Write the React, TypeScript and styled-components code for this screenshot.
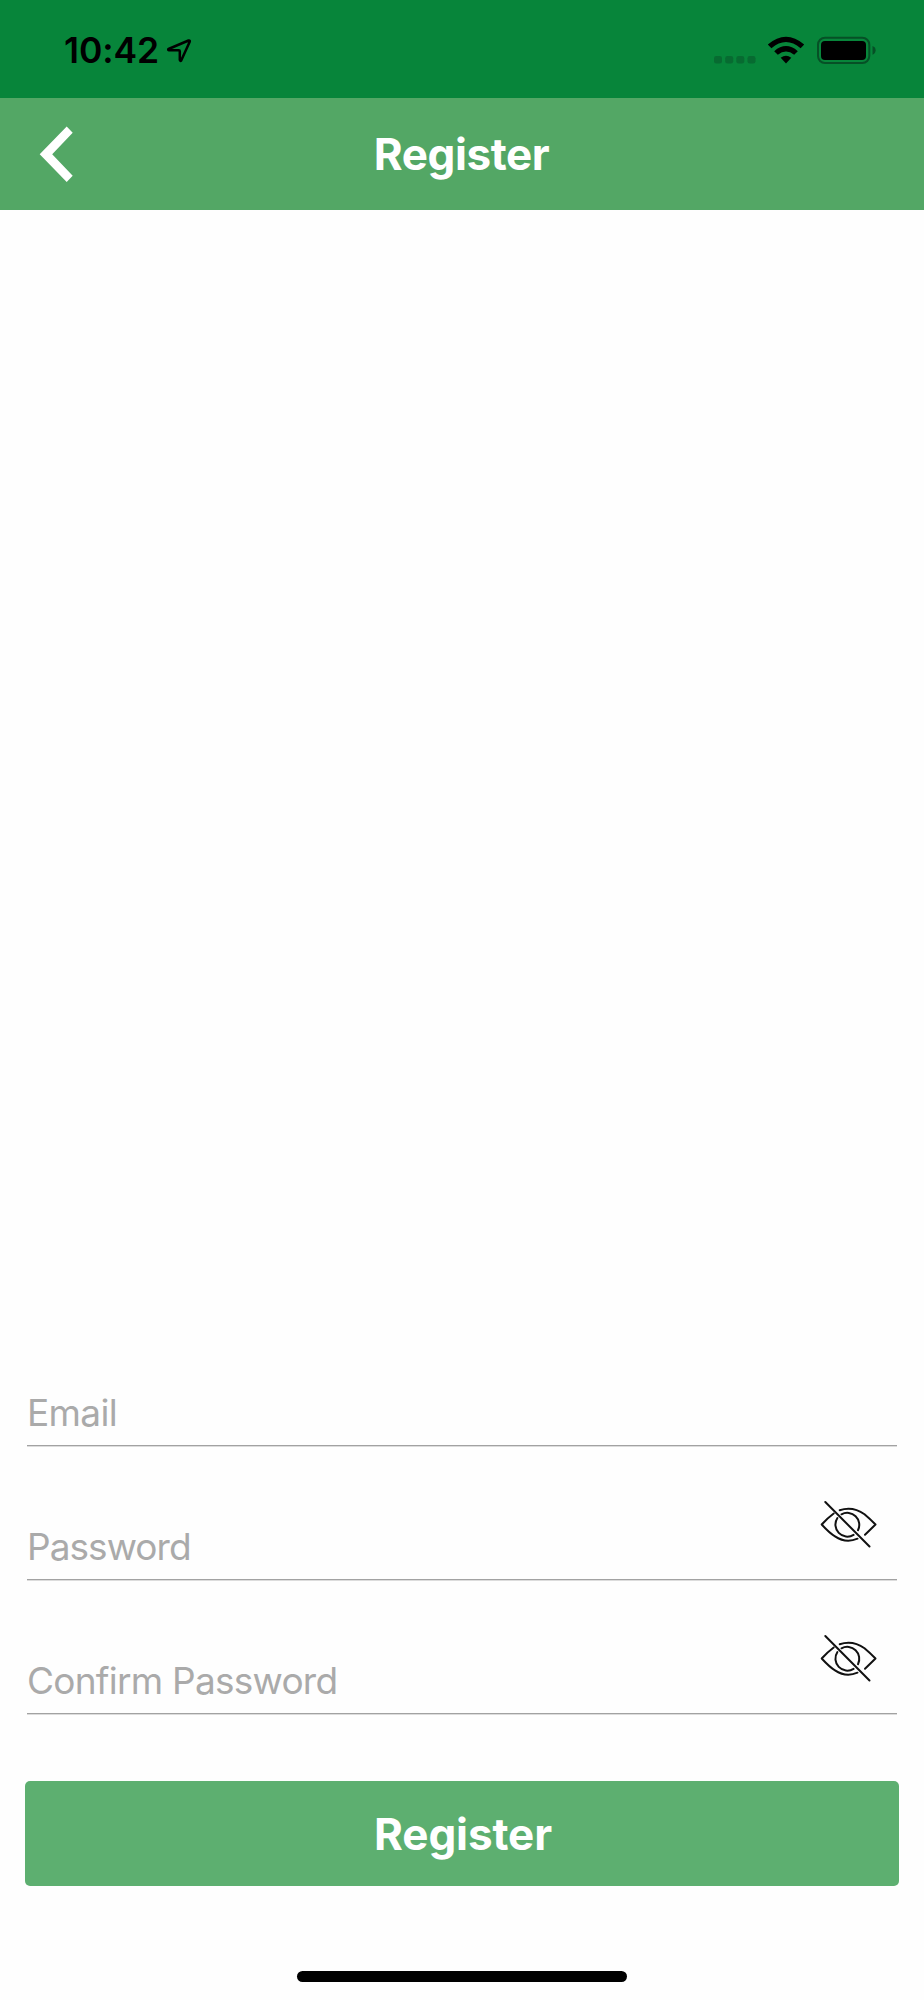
import React from "react";
import styled, { createGlobalStyle } from "styled-components";

const GlobalStyle = createGlobalStyle`
  *, *::before, *::after { box-sizing: border-box; }
  body {
    margin: 0;
    background: #fefefe;
    font-family: Inter, "Liberation Sans", sans-serif;
  }
`;

const Screen = styled.main`
  display: flex;
  flex-direction: column;
  width: 924px;
  height: 2000px;
  background: #fefefe;
  overflow: hidden;
`;

const StatusBar = styled.div`
  display: flex;
  justify-content: space-between;
  flex: none;
  height: 98px;
  padding: 29px 47px 0 64px;
  background: #07853a;
`;

const StatusGroup = styled.div`
  display: flex;
  align-items: flex-start;
`;

const Clock = styled.span`
  width: 103px;
  font-size: 35.5px;
  font-weight: 600;
  line-height: 43px;
  letter-spacing: -0.1px;
  color: #000;
`;

const Header = styled.header`
  display: grid;
  grid-template-columns: 120px 1fr 120px;
  align-items: center;
  flex: none;
  height: 112px;
  background: #53a765;
`;

const BackButton = styled.button`
  display: flex;
  padding: 0 0 0 39px;
  border: 0;
  background: none;
`;

const Title = styled.h1`
  margin: 0;
  padding-right: 1px;
  text-align: center;
  font-size: 44px;
  font-weight: 700;
  line-height: 54px;
  letter-spacing: -0.4px;
  color: #fff;
`;

const Form = styled.form`
  display: flex;
  flex-direction: column;
  justify-content: flex-end;
  flex: 1;
  padding: 0 25px 85px;
`;

const Field = styled.label`
  display: flex;
  justify-content: space-between;
  align-items: flex-end;
  height: 134px;
  margin: 0 2px;
  border-bottom: 1px solid #a2a2a2;
  box-shadow: 0 1px #dcdcdc;
`;

const Placeholder = styled.span<{ $tracking: number }>`
  padding-bottom: 9px;
  font-size: 37px;
  font-weight: 400;
  line-height: 46px;
  letter-spacing: ${(p) => p.$tracking}px;
  color: #aaa;
`;

const EyeToggle = styled.button`
  display: flex;
  padding: 0;
  margin: 0 18px 30px 0;
  border: 0;
  background: none;
`;

const SubmitButton = styled.button`
  height: 105px;
  margin-top: 67px;
  padding: 0 0 0 2px;
  border: 0;
  border-radius: 5px;
  background: #5daf70;
  font-family: inherit;
  font-size: 44px;
  font-weight: 700;
  letter-spacing: -0.1px;
  color: #fff;
`;

const HomeArea = styled.div`
  display: flex;
  justify-content: center;
  flex: none;
  height: 29px;
`;

const HomeIndicator = styled.div`
  width: 330px;
  height: 11px;
  border-radius: 6px;
  background: #000;
`;

const LocationIcon = () => (
  <svg width="26" height="43" viewBox="167 29 26 43" fill="none" stroke="#000" strokeWidth="2.5" strokeLinejoin="round">
    <path d="M168.5 49 L188.5 40.5 Q190.3 40 189.6 42 L181.2 60.5 Q180.2 61.5 179.8 60 V51.2 Q179.8 50.2 178.8 50.2 H169 Q167.5 49.8 168.5 49 Z" />
  </svg>
);

const StatusIcons = () => (
  <svg width="164" height="43" viewBox="713 29 164 43">
    <g fill="#076b31">
      <rect x="714" y="56" width="8" height="7.5" rx="2.3" />
      <rect x="725.2" y="56" width="8" height="7.5" rx="2.3" />
      <rect x="736.3" y="56" width="8" height="7.5" rx="2.3" />
      <rect x="747.5" y="56" width="8" height="7.5" rx="2.3" />
    </g>
    <path d="M767.8 44.6 Q786 29 804.2 44.6 L800.6 48.2 Q786 36 771.4 48.2 Z" />
    <path d="M774.2 51.2 Q786 41 797.8 51.2 L794.2 54.8 Q786 48 777.8 54.8 Z" />
    <path d="M780.7 57.7 Q786 53.6 791.3 57.7 L786 63.4 Z" />
    <rect x="818" y="37.7" width="51.3" height="25.4" rx="7" fill="none" stroke="#065026" strokeWidth="2" />
    <rect x="821" y="41" width="45" height="19" rx="4" />
    <path d="M872.5 46 Q875.6 47 875.6 50.3 T872.5 54.8 Z" fill="#065026" />
  </svg>
);

const ChevronIcon = () => (
  <svg width="34" height="56" viewBox="39.3 126 34 56">
    <path d="M40 154.3 L67 126.5 L73 132.8 L52.5 154.3 L73 175.7 L67 182 Z" fill="#fff" />
  </svg>
);

const EyeOffIcon = () => (
  <svg width="60" height="50" viewBox="819 1499 60 50" fill="none" stroke="#111" strokeWidth="2" strokeLinecap="round" strokeLinejoin="round">
    <path d="M825.3 1502 L869.5 1546.5" />
    <path d="M833.7 1513.5 Q827 1518.5 821.7 1524.5 Q830 1533.5 835 1536.3 C842 1541 850 1541.8 857.5 1538.7" />
    <path d="M839.7 1510.3 C848 1507.5 857 1509 864.5 1514.3 Q869.5 1518.5 875.5 1524.5 L865 1534.7" />
    <path d="M841.5 1514.3 A12 12 0 0 1 858 1530.2" />
    <path d="M837.4 1518 A12 12 0 0 0 853.6 1534.9" />
  </svg>
);

const fields = [
  { label: "Email", secret: false, tracking: -0.65 },
  { label: "Password", secret: true, tracking: -0.95 },
  { label: "Confirm Password", secret: true, tracking: -0.75 },
];

export default function App() {
  return (
    <>
      <GlobalStyle />
      <Screen>
        <StatusBar>
          <StatusGroup>
            <Clock>10:42</Clock>
            <LocationIcon />
          </StatusGroup>
          <StatusGroup>
            <StatusIcons />
          </StatusGroup>
        </StatusBar>
        <Header>
          <BackButton type="button" aria-label="Back">
            <ChevronIcon />
          </BackButton>
          <Title>Register</Title>
        </Header>
        <Form>
          {fields.map((field) => (
            <Field key={field.label}>
              <Placeholder $tracking={field.tracking}>{field.label}</Placeholder>
              {field.secret && (
                <EyeToggle type="button" aria-label="Show password">
                  <EyeOffIcon />
                </EyeToggle>
              )}
            </Field>
          ))}
          <SubmitButton type="button">Register</SubmitButton>
        </Form>
        <HomeArea>
          <HomeIndicator />
        </HomeArea>
      </Screen>
    </>
  );
}
